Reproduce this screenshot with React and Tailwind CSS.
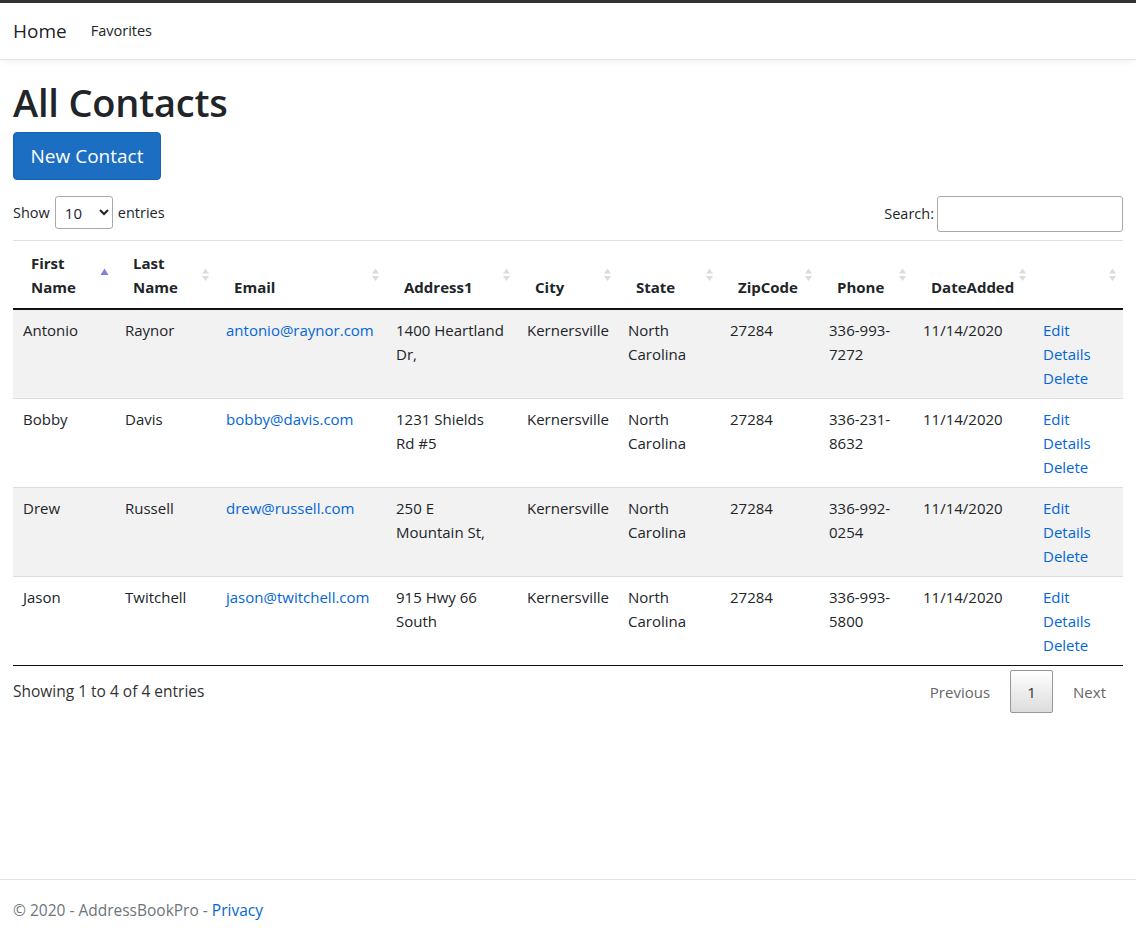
import { useState } from "react";

const contacts = [
  {
    first: "Antonio",
    last: "Raynor",
    email: "antonio@raynor.com",
    address: ["1400 Heartland", "Dr,"],
    city: "Kernersville",
    phone: ["336-993-", "7272"],
  },
  {
    first: "Bobby",
    last: "Davis",
    email: "bobby@davis.com",
    address: ["1231 Shields", "Rd #5"],
    city: "Kernersville",
    phone: ["336-231-", "8632"],
  },
  {
    first: "Drew",
    last: "Russell",
    email: "drew@russell.com",
    address: ["250 E", "Mountain St,"],
    city: "Kernersville",
    phone: ["336-992-", "0254"],
  },
  {
    first: "Jason",
    last: "Twitchell",
    email: "jason@twitchell.com",
    address: ["915 Hwy 66", "South"],
    city: "Kernersville",
    phone: ["336-993-", "5800"],
  },
];

const columns = [
  { label: ["First", "Name"], width: "w-[102px]", sort: "asc" },
  { label: ["Last", "Name"], width: "w-[101px]" },
  { label: ["Email"], width: "w-[170px]" },
  { label: ["Address1"], width: "w-[131px]" },
  { label: ["City"], width: "w-[101px]" },
  { label: ["State"], width: "w-[102px]" },
  { label: ["ZipCode"], width: "w-[99px]" },
  { label: ["Phone"], width: "w-[94px]" },
  { label: ["DateAdded"], width: "w-[120px]" },
  { label: [], width: "w-[90px]" },
];

// little up/down arrows like the datatables sort images
const SortIcon = ({ dir }) => {
  if (dir === "asc") {
    return (
      <svg width="9" height="14" viewBox="0 0 9 14" className="absolute right-[6px] top-1/2 -translate-y-1/2">
        <path d="M4.5 0.5 L8.5 7 L0.5 7 Z" fill="#7f7fdc" />
      </svg>
    );
  }
  return (
    <svg width="9" height="14" viewBox="0 0 9 14" className="absolute right-[6px] top-1/2 -translate-y-1/2">
      <path d="M4.5 0.5 L8 5.5 L1 5.5 Z" fill="#dcdcdc" />
      <path d="M4.5 13 L8 8 L1 8 Z" fill="#dcdcdc" />
    </svg>
  );
};

const App = () => {
  const [pageSize, setPageSize] = useState("10");
  const [search, setSearch] = useState("");

  return (
    <div className="min-h-[940px] flex flex-col bg-white text-[#212529] font-['Open_Sans',sans-serif] text-[15px] leading-6">
      <div className="h-[3px] bg-[#333]" />

      {/* Navbar */}
      <nav className="h-[57px] border-b border-[#e5e5e5] shadow-[0_4px_6px_-2px_rgba(0,0,0,0.06)] flex items-center px-[13px]">
        <a className="text-[19px] text-black/90 mr-6">Home</a>
        <a className="text-[14.5px] text-[#212529]">Favorites</a>
      </nav>

      <main className="px-[13px] pt-[18px] pb-10">
        <h1 className="text-[38px] font-semibold leading-[48px] tracking-[-0.2px] mb-[6px]">All Contacts</h1>
        <button className="h-12 w-[148px] rounded bg-[#1b6ec2] border border-[#1861ac] text-white text-[19px]">
          New Contact
        </button>

        {/* Length + search */}
        <div className="mt-[13px] flex items-center justify-between">
          <div className="flex items-center gap-[5px] text-[14.5px]">
            <span>Show</span>
            <select
              value={pageSize}
              onChange={(e) => setPageSize(e.target.value)}
              className="h-[33px] w-[58px] border border-[#aaa] rounded-[3px] bg-white pl-[5px] text-[15px]"
            >
              <option>10</option>
              <option>25</option>
              <option>50</option>
              <option>100</option>
            </select>
            <span>entries</span>
          </div>
          <div className="flex items-center gap-[3px] text-[14.5px] mt-[3px]">
            <span>Search:</span>
            <input
              value={search}
              onChange={(e) => setSearch(e.target.value)}
              className="h-9 w-[186px] border border-[#aaa] rounded-[3px] px-1"
            />
          </div>
        </div>

        {/* Table */}
        <table className="mt-2 w-full border-collapse border-t border-[#dee2e6] table-fixed">
          <thead>
            <tr className="border-b-2 border-[#111]">
              {columns.map((col, i) => (
                <th key={i} className={`${col.width} relative align-bottom text-left font-bold pt-[10px] pb-[9px] pl-[18px] pr-[18px]`}>
                  {col.label.map((l, j) => (
                    <div key={j}>{l}</div>
                  ))}
                  <SortIcon dir={col.sort} />
                </th>
              ))}
            </tr>
          </thead>
          <tbody>
            {contacts.map((c, i) => (
              <tr key={c.email} className={`align-top ${i < contacts.length - 1 ? "border-b border-[#ddd]" : ""} ${i % 2 === 0 ? "bg-[#f2f2f2]" : "bg-white"}`}>
                <td className="px-[10px] py-2">{c.first}</td>
                <td className="px-[10px] py-2">{c.last}</td>
                <td className="px-[10px] py-2 whitespace-nowrap">
                  <a className="text-[#0366d6]">{c.email}</a>
                </td>
                <td className="px-[10px] py-2 whitespace-nowrap">
                  {c.address[0]}
                  <br />
                  {c.address[1]}
                </td>
                <td className="px-[10px] py-2">{c.city}</td>
                <td className="px-[10px] py-2">
                  North
                  <br />
                  Carolina
                </td>
                <td className="px-[10px] py-2">27284</td>
                <td className="px-[10px] py-2 whitespace-nowrap">
                  {c.phone[0]}
                  <br />
                  {c.phone[1]}
                </td>
                <td className="px-[10px] py-2">11/14/2020</td>
                <td className="px-[10px] py-2 text-[#0366d6]">
                  <a className="block">Edit</a>
                  <a className="block">Details</a>
                  <a className="block">Delete</a>
                </td>
              </tr>
            ))}
          </tbody>
          <tfoot>
            <tr className="border-t border-[#111]">
              <td colSpan={10} />
            </tr>
          </tfoot>
        </table>

        {/* Info + paging */}
        <div className="flex items-start justify-between mt-[12px]">
          <div className="text-[15.5px] text-[#333] mt-[1px]">Showing 1 to 4 of 4 entries</div>
          <div className="flex items-center text-[15px] text-[#666] -mt-[8px] -mr-[1px]">
            <span className="px-[18px] py-2">Previous</span>
            <span className="h-[43px] w-[43px] flex items-center justify-center border border-[#979797] rounded-[2px] bg-gradient-to-b from-white to-[#dcdcdc] text-[#333] mx-[2px]">
              1
            </span>
            <span className="px-[18px] py-2">Next</span>
          </div>
        </div>
      </main>

      <footer className="mt-auto border-t border-[#e5e5e5] h-[61px] flex items-center px-[13px] text-[15.5px] text-[#6c757d]">
        <span>
          © 2020 - AddressBookPro - <a className="text-[#0366d6]">Privacy</a>
        </span>
      </footer>
    </div>
  );
};

export default App;
